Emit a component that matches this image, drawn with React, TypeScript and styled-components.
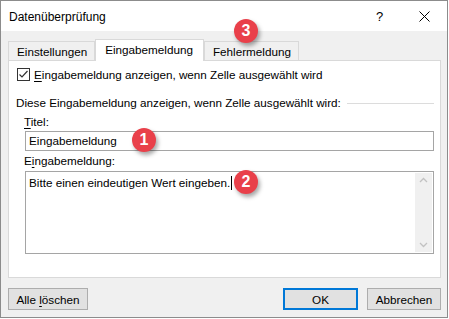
import React from 'react';
import styled, { createGlobalStyle, css } from 'styled-components';

const GlobalStyle = createGlobalStyle`
  html, body {
    margin: 0;
    padding: 0;
    background: #ffffff;
  }
`;

const Window = styled.div`
  position: relative;
  width: 448px;
  height: 318px;
  box-sizing: border-box;
  border: 1px solid #8c8c8c;
  background: #f0f0f0;
  display: flex;
  flex-direction: column;
  font-family: 'Liberation Sans', Arial, sans-serif;
  font-size: 11.7px;
  color: #000;
`;

const TitleBar = styled.div`
  height: 30px;
  background: #ffffff;
  display: flex;
  align-items: center;
  padding-left: 8px;
`;

const Title = styled.div`
  flex: 1;
  font-size: 12px;
  padding-top: 1px;
`;

const CaptionButton = styled.div`
  width: 45px;
  height: 30px;
  display: flex;
  align-items: center;
  justify-content: center;
  font-size: 13px;
`;

const Body = styled.div`
  flex: 1;
  display: flex;
  flex-direction: column;
  padding: 8px 6px 0 7px;
`;

const TabRow = styled.div`
  display: flex;
  align-items: flex-end;
  height: 21px;
  position: relative;
  z-index: 1;
`;

const Tab = styled.div<{ $active?: boolean }>`
  box-sizing: border-box;
  border: 1px solid #d9d9d9;
  border-bottom: none;
  display: flex;
  align-items: center;
  white-space: nowrap;
  ${(p) =>
    p.$active
      ? css`
          height: 22px;
          margin-bottom: -1px;
          background: #ffffff;
          padding: 0 10px 2px 9px;
        `
      : css`
          height: 19px;
          background: #f0f0f0;
          padding: 0 7px 0 8px;
        `}
`;

const Panel = styled.div`
  width: 433px;
  height: 218px;
  box-sizing: border-box;
  border: 1px solid #d9d9d9;
  background: #ffffff;
  display: flex;
  flex-direction: column;
  padding: 6px 6px 0 8px;
`;

const CheckRow = styled.label`
  display: flex;
  align-items: center;
  height: 15px;
  line-height: 15px;
  gap: 4px;
`;

const CheckBox = styled.span`
  width: 13px;
  height: 13px;
  box-sizing: border-box;
  border: 1px solid #333333;
  background: #ffffff;
  display: flex;
  align-items: center;
  justify-content: center;
`;

const GroupHeading = styled.div`
  display: flex;
  align-items: center;
  margin-top: 13px;
  margin-left: -1px;
  line-height: 15px;
  gap: 6px;

  &::after {
    content: '';
    flex: 1;
    height: 1px;
    background: #dcdcdc;
    margin-top: 1px;
  }
`;

const FieldLabel = styled.div<{ $gap: number }>`
  margin-top: ${(p) => p.$gap}px;
  margin-left: 7px;
  line-height: 15px;
`;

const TextInput = styled.div`
  margin-top: 2px;
  margin-left: 8px;
  width: 409px;
  height: 20px;
  box-sizing: border-box;
  border: 1px solid #a5a5a5;
  padding-left: 3px;
  line-height: 18px;
`;

const TextArea = styled.div`
  margin-top: 3px;
  margin-left: 8px;
  width: 409px;
  height: 83px;
  box-sizing: border-box;
  border: 1px solid #a5a5a5;
  display: flex;
`;

const AreaText = styled.div`
  flex: 1;
  padding: 3px 3px;
  line-height: 15px;
  white-space: nowrap;
`;

const Caret = styled.span`
  display: inline-block;
  width: 1px;
  height: 14px;
  background: #000;
  vertical-align: -3px;
  margin-left: 1px;
`;

const ScrollBar = styled.div`
  width: 17px;
  margin: 1px 1px 1px 0;
  background: #f0f0f0;
  display: flex;
  flex-direction: column;
  justify-content: space-between;
  align-items: center;
  padding: 4px 0;
`;

const ButtonRow = styled.div`
  display: flex;
  align-items: center;
  margin-top: 10px;
  height: 22px;
  gap: 9px;
`;

const Button = styled.div<{ $primary?: boolean; $width: number }>`
  width: ${(p) => p.$width}px;
  height: 22px;
  box-sizing: border-box;
  background: #e1e1e1;
  border: ${(p) => (p.$primary ? '2px solid #0078d7' : '1px solid #adadad')};
  display: flex;
  align-items: center;
  justify-content: center;
  line-height: 15px;
`;

const Spacer = styled.div`
  flex: 1;
`;

const Key = styled.span`
  text-decoration: underline;
  text-underline-offset: 2px;
`;

const Badge = styled.div<{ $x: number; $y: number }>`
  position: absolute;
  left: ${(p) => p.$x}px;
  top: ${(p) => p.$y}px;
  width: 24px;
  height: 24px;
  border-radius: 50%;
  background: #e9404a;
  color: #ffffff;
  font-family: 'Liberation Sans', Arial, sans-serif;
  font-weight: bold;
  font-size: 16px;
  display: flex;
  align-items: center;
  justify-content: center;
  box-shadow: 2px 3px 4px rgba(0, 0, 0, 0.35);
  z-index: 5;
`;

const Chevron = ({ up }: { up?: boolean }) => (
  <svg width="9" height="6" viewBox="0 0 9 6">
    <polyline
      points={up ? '1,5 4.5,1.5 8,5' : '1,1 4.5,4.5 8,1'}
      fill="none"
      stroke="#c2c2c2"
      strokeWidth="1.3"
    />
  </svg>
);

export default function App() {
  return (
    <>
      <GlobalStyle />
      <Window>
        <TitleBar>
          <Title>Datenüberprüfung</Title>
          <CaptionButton>?</CaptionButton>
          <CaptionButton>
            <svg width="11" height="11" viewBox="0 0 11 11">
              <path d="M0.5 0.5 L10.5 10.5 M10.5 0.5 L0.5 10.5" stroke="#000" strokeWidth="1" />
            </svg>
          </CaptionButton>
        </TitleBar>
        <Body>
          <TabRow>
            <Tab>Einstellungen</Tab>
            <Tab $active>Eingabemeldung</Tab>
            <Tab>Fehlermeldung</Tab>
          </TabRow>
          <Panel>
            <CheckRow>
              <CheckBox>
                <svg width="11" height="11" viewBox="0 0 11 11">
                  <polyline points="1.5,5.5 4,8 9.5,2" fill="none" stroke="#333" strokeWidth="1.2" />
                </svg>
              </CheckBox>
              <span>
                <Key>E</Key>ingabemeldung anzeigen, wenn Zelle ausgewählt wird
              </span>
            </CheckRow>
            <GroupHeading>Diese Eingabemeldung anzeigen, wenn Zelle ausgewählt wird:</GroupHeading>
            <FieldLabel $gap={4}>
              <Key>T</Key>itel:
            </FieldLabel>
            <TextInput>Eingabemeldung</TextInput>
            <FieldLabel $gap={2}>
              E<Key>i</Key>ngabemeldung:
            </FieldLabel>
            <TextArea>
              <AreaText>
                Bitte einen eindeutigen Wert eingeben.
                <Caret />
              </AreaText>
              <ScrollBar>
                <Chevron up />
                <Chevron />
              </ScrollBar>
            </TextArea>
          </Panel>
          <ButtonRow>
            <Button $width={80}>
              Alle&nbsp;<Key>l</Key>öschen
            </Button>
            <Spacer />
            <Button $primary $width={75}>
              OK
            </Button>
            <Button $width={74}>Abbrechen</Button>
          </ButtonRow>
        </Body>
        <Badge $x={233} $y={18}>3</Badge>
        <Badge $x={131} $y={127}>1</Badge>
        <Badge $x={233} $y={169}>2</Badge>
      </Window>
    </>
  );
}
